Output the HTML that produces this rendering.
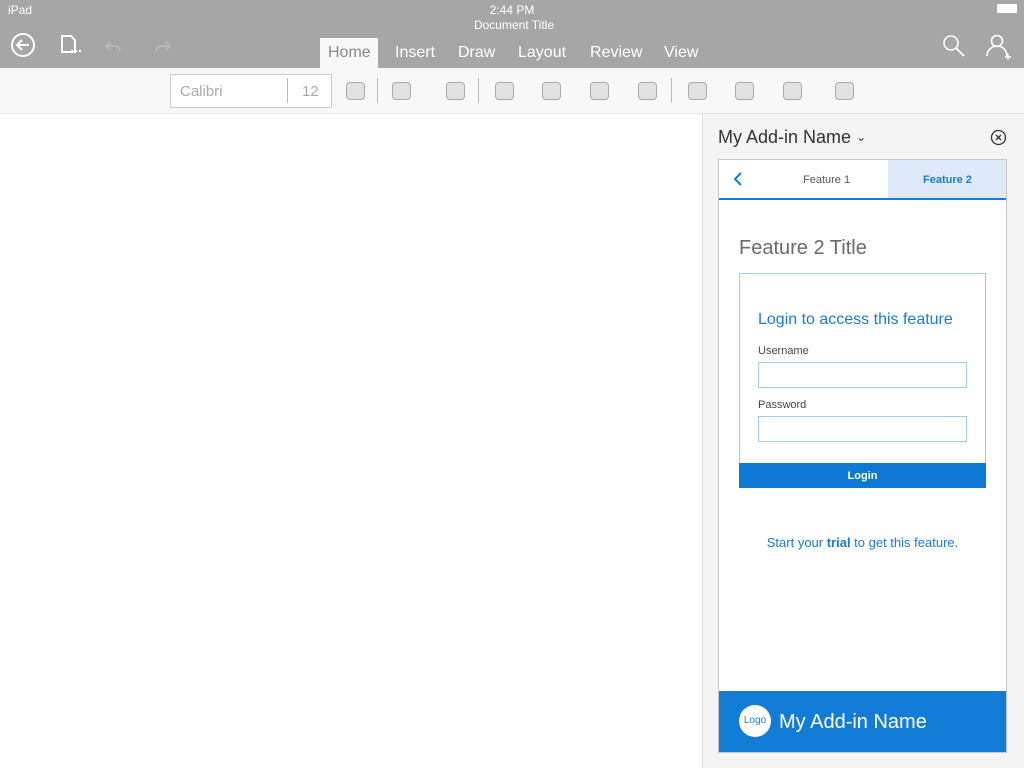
<!DOCTYPE html>
<html><head><meta charset="utf-8"><style>
*{margin:0;padding:0;box-sizing:border-box}
body{width:1024px;height:768px;position:relative;overflow:hidden;background:#fff;font-family:"Liberation Sans",sans-serif}
.a{position:absolute}
.top{left:0;top:0;width:1024px;height:68px;background:#a6a6a6;color:#fff}
.tab{top:44px;font-size:16px;color:#fff}
.tb{left:0;top:68px;width:1024px;height:46px;background:#f8f8f8;border-bottom:1px solid #e4e4e4}
.btn{top:82px;width:19px;height:18px;border:1px solid #aaa;border-radius:4px;background:#e2e2e2}
.sep{top:78px;width:1px;height:25px;background:#bbb}
.in{border:1px solid #9fcbf0;background:#fff;height:26px;width:209px;left:758px}
</style></head><body>
<div class="a top">
 <div class="a" style="left:8px;top:3px;font-size:12px">iPad</div>
 <div class="a" style="left:0;width:1024px;top:3px;font-size:12px;text-align:center">2:44 PM</div>
 <div class="a" style="left:0;width:1028px;top:18px;font-size:12px;text-align:center">Document Title</div>
 <div class="a" style="left:997px;top:4px;width:20px;height:9px;background:#fff;border-radius:1px"></div>
 <svg class="a" style="left:0;top:30px" width="200" height="34">
  <circle cx="23" cy="15" r="11" fill="none" stroke="#fff" stroke-width="2"/>
  <path d="M29 15H17M22 10l-5 5 5 5" fill="none" stroke="#fff" stroke-width="2"/>
  <path d="M62 6h9l4 4v12h-13z" fill="none" stroke="#fff" stroke-width="2"/>
  <circle cx="72" cy="21" r="1.2" fill="#fff"/><circle cx="76" cy="21" r="1.2" fill="#fff"/><circle cx="80" cy="21" r="1.2" fill="#fff"/>
  <path d="M110 12l-4 4 4 4M106 16h9a5 5 0 0 1 5 5" fill="none" stroke="#bdbdbd" stroke-width="1.5"/>
  <path d="M166 12l4 4-4 4M170 16h-9a5 5 0 0 0-5 5" fill="none" stroke="#bdbdbd" stroke-width="1.5"/>
 </svg>
 <svg class="a" style="left:936px;top:30px" width="80" height="34">
  <circle cx="15" cy="13" r="7" fill="none" stroke="#fff" stroke-width="1.6"/>
  <path d="M20 18l8 8" stroke="#fff" stroke-width="1.8"/>
  <circle cx="61" cy="11" r="5.5" fill="none" stroke="#fff" stroke-width="1.6"/>
  <path d="M51 26a10 10 0 0 1 20 0" fill="none" stroke="#fff" stroke-width="1.6"/>
  <path d="M72 24v6M69 27h6" stroke="#fff" stroke-width="1.4"/>
 </svg>
 <div class="a" style="left:320px;top:38px;width:58px;height:30px;background:#f8f8f8"></div>
 <div class="a tab" style="left:328px;color:#888">Home</div>
 <div class="a tab" style="left:395px">Insert</div>
 <div class="a tab" style="left:458px">Draw</div>
 <div class="a tab" style="left:518px">Layout</div>
 <div class="a tab" style="left:590px">Review</div>
 <div class="a tab" style="left:664px">View</div>
</div>
<div class="a tb"></div>
<div class="a" style="left:170px;top:74px;width:162px;height:34px;border:1px solid #ccc;background:#fff"></div>
<div class="a" style="left:180px;top:83px;font-size:15px;color:#aaa">Calibri</div>
<div class="a" style="left:287px;top:78px;width:1px;height:25px;background:#bbb"></div>
<div class="a" style="left:302px;top:83px;font-size:15px;color:#aaa">12</div>
<div class="a btn" style="left:346px"></div>
<div class="a sep" style="left:377px"></div>
<div class="a btn" style="left:392px"></div>
<div class="a btn" style="left:446px"></div>
<div class="a sep" style="left:478px"></div>
<div class="a btn" style="left:495px"></div>
<div class="a btn" style="left:542px"></div>
<div class="a btn" style="left:590px"></div>
<div class="a btn" style="left:638px"></div>
<div class="a sep" style="left:671px"></div>
<div class="a btn" style="left:688px"></div>
<div class="a btn" style="left:735px"></div>
<div class="a btn" style="left:783px"></div>
<div class="a btn" style="left:835px"></div>

<div class="a" style="left:702px;top:114px;width:322px;height:654px;background:#f4f4f4;border-left:1px solid #ddd"></div>
<div class="a" style="left:718px;top:127px;font-size:18px;color:#333">My Add-in Name <span style="font-size:12px;position:relative;top:-2px">&#8964;</span></div>
<svg class="a" style="left:990px;top:129px" width="17" height="17"><circle cx="8.5" cy="8.5" r="7" fill="none" stroke="#333" stroke-width="1.3"/><path d="M6 6l5 5M11 6l-5 5" stroke="#333" stroke-width="1.4"/></svg>

<div class="a" style="left:718px;top:159px;width:289px;height:594px;border:1px solid #c8c8c8;background:#fff"></div>
<div class="a" style="left:888px;top:160px;width:118px;height:39px;background:#deeaf7"></div>
<div class="a" style="left:719px;top:198px;width:287px;height:2px;background:#1a7ad4"></div>
<svg class="a" style="left:733px;top:171px" width="12" height="16"><path d="M8 2l-6 6 6 6" fill="none" stroke="#1a7ad4" stroke-width="2"/></svg>
<div class="a" style="left:803px;top:174px;font-size:11px;color:#555">Feature 1</div>
<div class="a" style="left:923px;top:174px;font-size:11px;color:#1a7ad4;font-weight:bold">Feature 2</div>
<div class="a" style="left:739px;top:237px;font-size:20px;color:#6a6a6a">Feature 2 Title</div>
<div class="a" style="left:739px;top:273px;width:247px;height:215px;border:1px solid #9fcbf0"></div>
<div class="a" style="left:758px;top:311px;font-size:16px;color:#1a7ad4">Login to access this feature</div>
<div class="a" style="left:758px;top:345px;font-size:11px;color:#444">Username</div>
<div class="a in" style="top:362px"></div>
<div class="a" style="left:758px;top:399px;font-size:11px;color:#444">Password</div>
<div class="a in" style="top:416px"></div>
<div class="a" style="left:739px;top:463px;width:247px;height:25px;background:#0f78d4;color:#fff;font-size:11px;font-weight:bold;text-align:center;line-height:26px">Login</div>
<div class="a" style="left:719px;width:287px;top:535px;font-size:13px;color:#1a7ad4;text-align:center">Start your <b>trial</b> to get this feature.</div>
<div class="a" style="left:719px;top:691px;width:287px;height:61px;background:#137cd6"></div>
<div class="a" style="left:739px;top:705px;width:32px;height:32px;border-radius:50%;background:#fff;color:#1a7ad4;font-size:10px;text-align:center;line-height:32px">Logo</div>
<div class="a" style="left:779px;top:711px;font-size:20px;color:#fff">My Add-in Name</div>
</body></html>
